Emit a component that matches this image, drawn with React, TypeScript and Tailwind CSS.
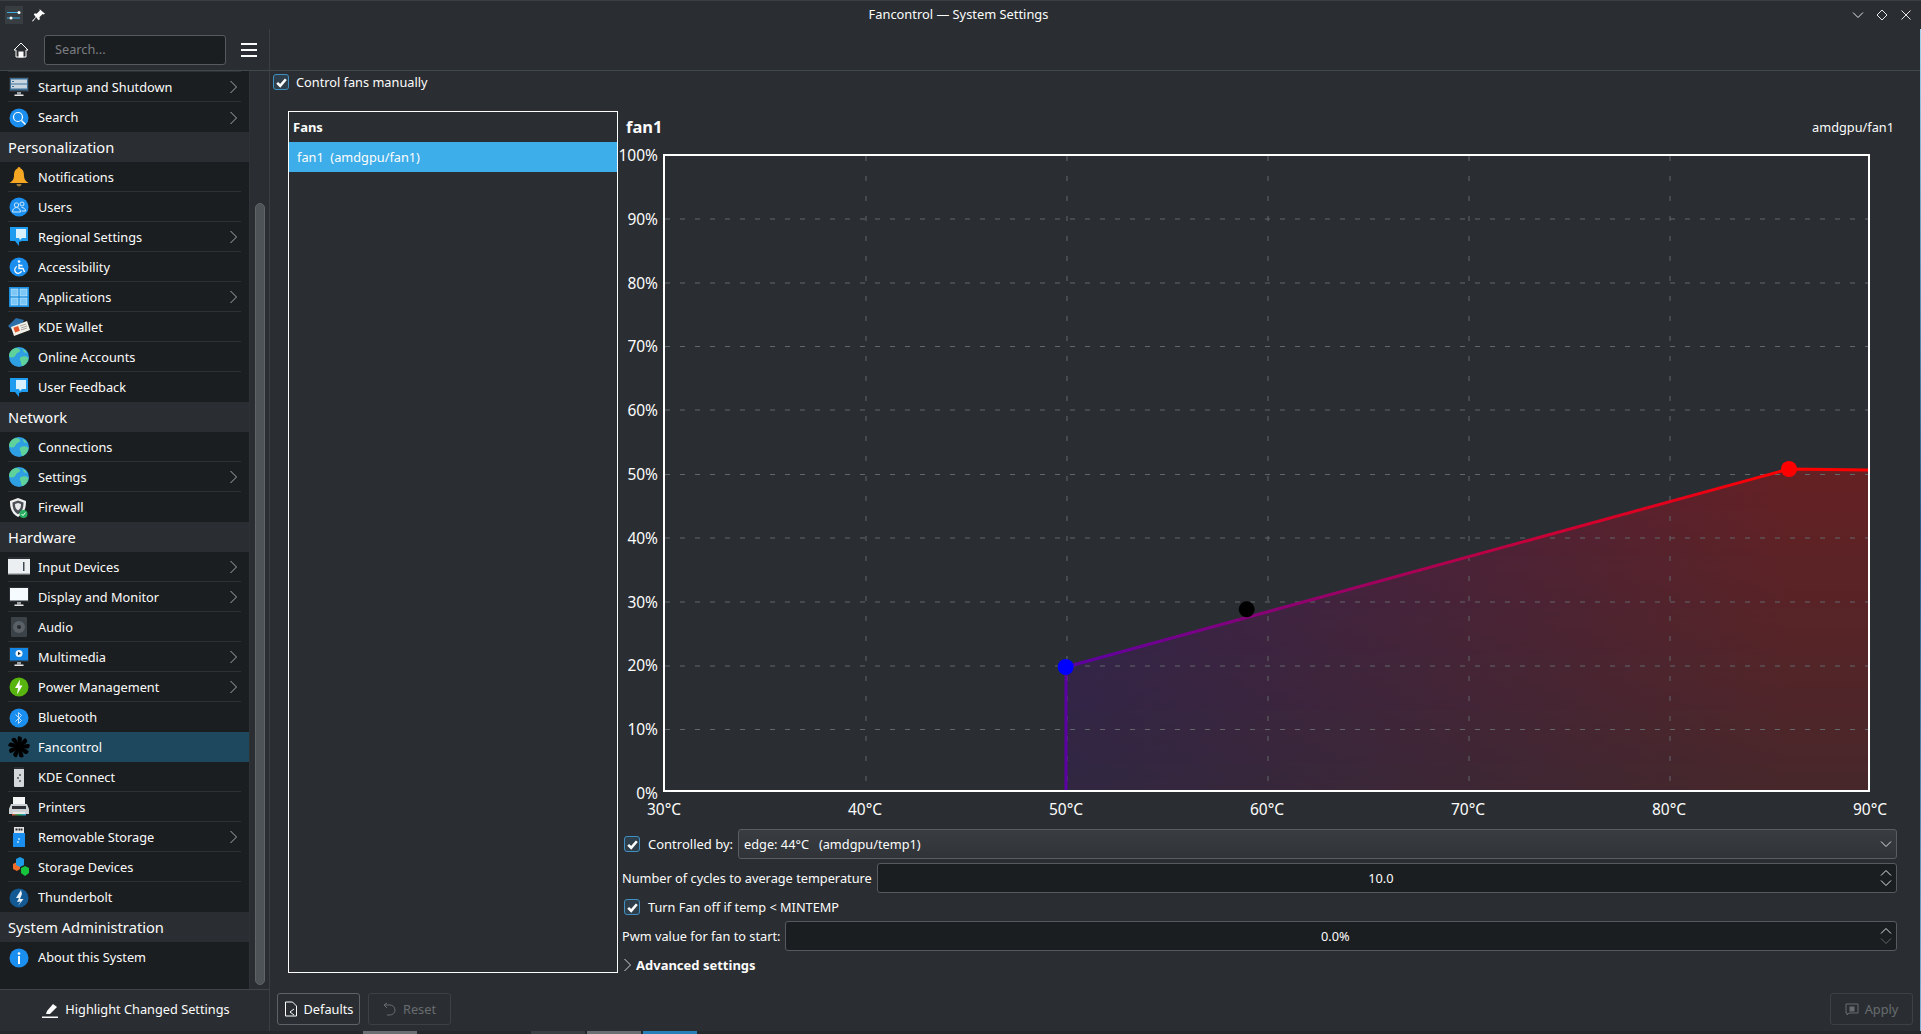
import React from "react";

type IconProps = { className?: string };

function Globe() {
  return (
    <svg viewBox="0 0 22 22" className="size-[22px]">
      <circle cx="11" cy="11" r="10" fill="#2f9fe4" />
      <path d="M6 2.500c3-1.500 6 0 6 2 0 2-3 2-4 4s-2 3-4 3-3-1-3-2c0-3 2-5.500 5-7z" fill="#5fd19a" />
      <path d="M13 11c2-1 6-1 7.500 1-.5 4-3 7-6 8-2-1-1-3-2-5s-1-3 .5-4z" fill="#5fd19a" />
      <path d="M15 3c2 1 3 2 4 4-2 0-4-1-4-4z" fill="#5fd19a" />
    </svg>
  );
}

function Bubble() {
  return (
    <svg viewBox="0 0 22 22" className="size-[22px]">
      <path d="M2 1h18v14h-6l-3 1v4l-4-5H2z" fill="#1e9cf0" />
      <path d="M8 3h10v9h-4l-2 2-1-2H8z" fill="#d9f0fd" />
    </svg>
  );
}

function BlueDisc({ children, fill = "#1b8fef" }: { children: React.ReactNode; fill?: string }) {
  return (
    <svg viewBox="0 0 22 22" className="size-[22px]">
      <circle cx="11" cy="11" r="9.500" fill={fill} />
      {children}
    </svg>
  );
}

function Monitor({ screen, children }: { screen: string; children?: React.ReactNode }) {
  return (
    <svg viewBox="0 0 22 22" className="size-[22px]">
      <rect x="1" y="1" width="20" height="15" fill="#2b2f33" />
      <rect x="2" y="2" width="18" height="12.500" fill={screen} />
      {children}
      <rect x="9" y="16" width="4" height="2.500" fill="#9a9ea2" />
      <rect x="6.500" y="18.500" width="9" height="1.500" fill="#e8e8e8" />
    </svg>
  );
}

function FanIcon() {
  const blades = [0, 1, 2, 3, 4, 5, 6, 7, 8];
  return (
    <svg viewBox="0 0 22 22" className="size-[22px]">
      <circle cx="11" cy="11" r="4" fill="#000" />
      {blades.map((i) => (
        <path
          key={i}
          d="M11 11C9.600 7.500 9 3.500 10 .2c2.500-.2 4 .8 4 2.400C13.800 6 12.600 8.600 11 11z"
          fill="#000"
          transform={`rotate(${i * 40} 11 11)`}
        />
      ))}
    </svg>
  );
}

const icons: Record<string, React.ReactNode> = {
  startup: (
    <Monitor screen="#3d6f96">
      <rect x="3" y="3.500" width="16" height="4" fill="#c9d6df" />
      <rect x="3" y="8.500" width="16" height="4" fill="#c9d6df" />
      <rect x="4" y="5" width="2" height="1" fill="#3d6f96" />
      <rect x="4" y="10" width="2" height="1" fill="#3d6f96" />
    </Monitor>
  ),
  search: (
    <BlueDisc>
      <circle cx="10" cy="10" r="4.500" fill="none" stroke="#fff" strokeWidth="1.200" />
      <path d="M13.500 13.500l4 4" stroke="#fff" strokeWidth="1.500" />
    </BlueDisc>
  ),
  bell: (
    <svg viewBox="0 0 22 22" className="size-[22px]">
      <path d="M11 1c1 0 1.500.8 1.500 1.500C15.500 3.500 16 7 16 10c0 3 1.500 5 4.500 7h-19C4.500 15 6 13 6 10c0-3 .5-6.500 3.500-7.500C9.500 1.800 10 1 11 1z" fill="#f5a623" />
      <path d="M8.500 18h5c0 1.500-1 2.500-2.500 2.500S8.500 19.500 8.500 18z" fill="#9a7b3a" />
    </svg>
  ),
  users: (
    <BlueDisc>
      <circle cx="8.500" cy="9" r="2.200" fill="none" stroke="#cfe8fb" />
      <circle cx="14" cy="8" r="2" fill="none" stroke="#cfe8fb" />
      <path d="M4.500 16c0-3 2-4.500 4-4.500s4 1.500 4 4.500zM13.500 11.500c2 0 4 1 4 3.500h-4" fill="none" stroke="#cfe8fb" />
    </BlueDisc>
  ),
  bubble: <Bubble />,
  access: (
    <BlueDisc>
      <circle cx="11" cy="5.500" r="1.300" fill="#fff" />
      <path d="M11 8v4.500h4l1.500 3.500M11 9.500h3.500M9 10.500a3.500 3.500 0 1 0 4.500 4.500" fill="none" stroke="#fff" strokeWidth="1.300" />
    </BlueDisc>
  ),
  apps: (
    <svg viewBox="0 0 22 22" className="size-[22px]">
      <rect x="1" y="1" width="20" height="20" fill="#1b8fe0" />
      <g fill="#7cc7f5" stroke="#e4f4fe" strokeWidth=".5">
        <rect x="3" y="3" width="7" height="7" />
        <rect x="12" y="3" width="7" height="7" />
        <rect x="3" y="12" width="7" height="7" />
        <rect x="12" y="12" width="7" height="7" />
      </g>
    </svg>
  ),
  wallet: (
    <svg viewBox="0 0 22 22" className="size-[22px]">
      <path d="M0 10L8 2l8 2-8 14z" fill="#2a6fa8" />
      <path d="M3 11L19 5l3 9-16 6z" fill="#f2efe6" />
      <rect x="6" y="11" width="5" height="5" transform="rotate(-20 8 13)" fill="#e2562a" />
      <path d="M12 10l6-2M13 12l6-2M13 14l6-2" stroke="#8a8a8a" strokeWidth=".7" />
    </svg>
  ),
  globe: <Globe />,
  shield: (
    <svg viewBox="0 0 22 22" className="size-[22px]">
      <path d="M10 1l8 3c0 8-2 13-8 16C4 17 2 12 2 4z" fill="#f0f0f0" />
      <path d="M10 3.500l5.500 2c0 5-1 9.500-5.500 11.800C5.500 15 4.500 10.500 4.500 5.500z" fill="#4a5056" />
      <path d="M10 6l3 1c0 3-.5 5-3 6.500C7.500 12 7 10 7 7z" fill="#e6e8ea" />
      <circle cx="15.500" cy="17" r="4" fill="#27ae60" />
      <path d="M13.500 17l1.500 1.500 2.500-3" fill="none" stroke="#fff" />
    </svg>
  ),
  input: (
    <svg viewBox="0 0 22 22" className="size-[22px]">
      <rect x="0" y="1" width="22" height="3" fill="#2c3034" />
      <rect x="0" y="3" width="22" height="15" fill="#eceff1" />
      <rect x="15" y="6" width="1.500" height="9" fill="#3e4a55" />
      <rect x="0" y="17" width="22" height="1.500" fill="#b8bcbf" />
    </svg>
  ),
  display: <Monitor screen="#f6fbff" />,
  audio: (
    <svg viewBox="0 0 22 22" className="size-[22px]">
      <rect x="3" y="1" width="16" height="20" rx="1" fill="#3b4248" />
      <circle cx="11" cy="11" r="6" fill="#596066" />
      <circle cx="11" cy="11" r="2" fill="#262a2d" />
    </svg>
  ),
  media: (
    <Monitor screen="#1486e6">
      <circle cx="11" cy="7.500" r="3.500" fill="#eef6fc" />
      <path d="M10 5.800v3.400l2.800-1.700z" fill="#1f2327" />
    </Monitor>
  ),
  power: (
    <BlueDisc fill="#58b50f">
      <path d="M12 3.500L7 12h3l-1 6.500 5.500-9h-3z" fill="#fff" />
    </BlueDisc>
  ),
  bluetooth: (
    <BlueDisc>
      <path d="M7.500 7.500l6 6-3 3v-11l3 3-6 6" fill="none" stroke="#bfe0f8" strokeWidth="1" />
    </BlueDisc>
  ),
  fan: <FanIcon />,
  phone: (
    <svg viewBox="0 0 22 22" className="size-[22px]">
      <rect x="6" y="1" width="10" height="20" rx="1" fill="#d5d8da" />
      <rect x="6" y="1" width="10" height="2" fill="#2d3135" />
      <circle cx="12" cy="9" r="1" fill="#555" />
      <circle cx="10" cy="12" r="1" fill="#555" />
      <circle cx="12" cy="15" r="1" fill="#555" />
    </svg>
  ),
  printer: (
    <svg viewBox="0 0 22 22" className="size-[22px]">
      <rect x="5" y="1" width="12" height="7" fill="#f4f5f5" />
      <path d="M3 8h16l2 5v5H1v-5z" fill="#cdd1d3" />
      <rect x="4" y="10" width="14" height="3" fill="#2e3236" />
      <rect x="5" y="16" width="12" height="2" fill="#e8e8e8" />
      <rect x="4" y="18" width="14" height="1.500" fill="url(#rainbow)" />
      <defs>
        <linearGradient id="rainbow">
          <stop offset="0" stopColor="#e74c3c" />
          <stop offset=".5" stopColor="#27ae60" />
          <stop offset="1" stopColor="#3498db" />
        </linearGradient>
      </defs>
    </svg>
  ),
  usb: (
    <svg viewBox="0 0 22 22" className="size-[22px]">
      <rect x="6" y="1" width="10" height="8" fill="#e4e4e4" />
      <rect x="7.500" y="2.500" width="2" height="2" fill="#23272a" />
      <rect x="10.500" y="2.500" width="2" height="2" fill="#23272a" />
      <rect x="13" y="2.500" width="1.500" height="2" fill="#23272a" />
      <rect x="5" y="7" width="12" height="14" fill="#1b8fef" />
      <circle cx="11" cy="13" r="1" fill="#bfe0f8" />
      <circle cx="10" cy="16" r="1" fill="#bfe0f8" />
    </svg>
  ),
  storage: (
    <svg viewBox="0 0 22 22" className="size-[22px]">
      <path d="M5 8l4-2 3 2v5l-3 2-4-2z" fill="#ef6c2a" />
      <path d="M12 1l4 2v6l-4 2-4-2V3z" fill="#1d9be8" />
      <path d="M17 10l4 2v5l-4 3-4-3v-5z" fill="#17c53d" />
    </svg>
  ),
  thunder: (
    <BlueDisc fill="#135a94">
      <path d="M13 3L8 11h3l-2 4 3.500-.5L10 19l5.500-7H12l2-5z" fill="#e9f2f8" />
    </BlueDisc>
  ),
  about: (
    <BlueDisc>
      <circle cx="11" cy="6.500" r="1.300" fill="#fff" />
      <rect x="10" y="9" width="2" height="8" fill="#fff" />
    </BlueDisc>
  ),
};

type Item = { label: string; icon?: string; more?: boolean; head?: boolean; active?: boolean; last?: boolean };

const items: Item[] = [
  { label: "Startup and Shutdown", icon: "startup", more: true },
  { label: "Search", icon: "search", more: true, last: true },
  { label: "Personalization", head: true },
  { label: "Notifications", icon: "bell" },
  { label: "Users", icon: "users" },
  { label: "Regional Settings", icon: "bubble", more: true },
  { label: "Accessibility", icon: "access" },
  { label: "Applications", icon: "apps", more: true },
  { label: "KDE Wallet", icon: "wallet" },
  { label: "Online Accounts", icon: "globe" },
  { label: "User Feedback", icon: "bubble", last: true },
  { label: "Network", head: true },
  { label: "Connections", icon: "globe" },
  { label: "Settings", icon: "globe", more: true },
  { label: "Firewall", icon: "shield", last: true },
  { label: "Hardware", head: true },
  { label: "Input Devices", icon: "input", more: true },
  { label: "Display and Monitor", icon: "display", more: true },
  { label: "Audio", icon: "audio" },
  { label: "Multimedia", icon: "media", more: true },
  { label: "Power Management", icon: "power", more: true },
  { label: "Bluetooth", icon: "bluetooth", last: true },
  { label: "Fancontrol", icon: "fan", active: true, last: true },
  { label: "KDE Connect", icon: "phone" },
  { label: "Printers", icon: "printer" },
  { label: "Removable Storage", icon: "usb", more: true },
  { label: "Storage Devices", icon: "storage" },
  { label: "Thunderbolt", icon: "thunder", last: true },
  { label: "System Administration", head: true },
  { label: "About this System", icon: "about", last: true },
];

function ChevronUp({ className }: IconProps) {
  return (
    <svg viewBox="0 0 12 9" className={className} fill="none" stroke="currentColor">
      <path d="M1 7.500l5-5 5 5" />
    </svg>
  );
}

function ChevronDown({ className }: IconProps) {
  return (
    <svg viewBox="0 0 12 9" className={className} fill="none" stroke="currentColor">
      <path d="M1 1.500l5 5 5-5" />
    </svg>
  );
}

function ChevronRight({ className }: IconProps) {
  return (
    <svg viewBox="0 0 9 14" className={className} fill="none" stroke="currentColor">
      <path d="M1.500 1l6 6-6 6" />
    </svg>
  );
}

function Check() {
  return (
    <span className="flex size-4 shrink-0 items-center justify-center rounded-[3px] border border-[#3f8fc2] bg-[#2e3f4b]">
      <svg viewBox="0 0 12 12" className="size-[13px]" fill="none" stroke="#fcfcfc" strokeWidth="2.400">
        <path d="M2 6.300l2.800 2.700L10 3" />
      </svg>
    </span>
  );
}

function Row({ item }: { item: Item }) {
  if (item.head) {
    return (
      <div className="flex h-[30px] items-center bg-[#2a2e32] pl-2 text-[14.700px]">{item.label}</div>
    );
  }
  if (item.active) {
    return (
      <div className="flex h-[30px] items-center gap-2 bg-[#1e485e] pl-2">
        <span className="flex size-[22px] shrink-0">{icons[item.icon!]}</span>
        <span className="pt-px">{item.label}</span>
      </div>
    );
  }
  return (
    <div className="h-[30px] px-2">
      <div className={`flex h-[30px] items-center gap-2 pt-px ${item.last ? "" : "border-b border-[#2d3134]"}`}>
        <span className="flex size-[22px] shrink-0">{icons[item.icon!]}</span>
        <span className="flex-1 pt-px">{item.label}</span>
        {item.more && <ChevronRight className="mr-[3px] h-[14px] w-[9px] text-[#a8abad]" />}
      </div>
    </div>
  );
}

function Sidebar() {
  return (
    <div className="flex w-[270px] shrink-0 flex-col border-r border-[#3a3f43]">
      <div className="flex h-[42px] items-center border-b border-[#3f494b]">
        <svg viewBox="0 0 16 16" className="ml-[13px] size-4" fill="none" stroke="#fcfcfc" strokeWidth="1">
          <path d="M8 1L1 8h2v7h10V8h2z" />
          <rect x="6" y="10" width="4" height="5" fill="#fcfcfc" />
        </svg>
        <div className="ml-[15px] flex h-[30px] w-[182px] items-center rounded-[3px] border border-[#575b5f] bg-[#1b1e20] pl-[10px] text-[#7b7f83]">
          Search...
        </div>
        <div className="ml-[15px] flex w-4 flex-col gap-1">
          <span className="h-0.5 bg-[#fcfcfc]" />
          <span className="h-0.5 bg-[#fcfcfc]" />
          <span className="h-0.5 bg-[#fcfcfc]" />
        </div>
      </div>
      <div className="flex min-h-0 flex-1">
        <div className="w-[249px] shrink-0 bg-[#1b1e20]">
          <div className="mx-2 h-px bg-[#2d3134]" />
          {items.map((item) => (
            <Row key={item.label} item={item} />
          ))}
        </div>
        <div className="flex-1 border-l border-[#2f3336] pt-[132px] pl-[5px]">
          <div className="h-[782px] w-2.5 rounded-[5px] border border-[#5f6467] bg-[#4d5356]" />
        </div>
      </div>
      <div className="flex h-[42px] items-center justify-center gap-[7px] border-t border-[#3f4548] pb-[1px] pl-[3px]">
        <svg viewBox="0 0 16 16" className="size-4" fill="#fcfcfc">
          <path d="M5 9l6-7 4 3-7 7H4z" />
          <path d="M0 14.500h16V16H0z" />
        </svg>
        <span>Highlight Changed Settings</span>
      </div>
    </div>
  );
}

const yTicks = [100, 90, 80, 70, 60, 50, 40, 30, 20, 10, 0];
const xTicks = [30, 40, 50, 60, 70, 80, 90];

function Chart() {
  return (
    <div className="relative ml-[43px] mt-3 h-[638px] w-[1207px]">
      <svg viewBox="0 0 1207 638" className="block h-[638px] w-[1207px]">
        <defs>
          <linearGradient id="curve" gradientUnits="userSpaceOnUse" x1="0" y1="0" x2="1126" y2="0">
            <stop offset="0" stopColor="#0000ff" />
            <stop offset="1" stopColor="#ff0000" />
          </linearGradient>
          <linearGradient id="fade" gradientUnits="userSpaceOnUse" x1="0" y1="315" x2="0" y2="637">
            <stop offset="0" stopColor="#fff" stopOpacity="1" />
            <stop offset="1" stopColor="#fff" stopOpacity=".5" />
          </linearGradient>
          <mask id="fadeMask" maskUnits="userSpaceOnUse" x="0" y="0" width="1207" height="638">
            <rect width="1207" height="638" fill="url(#fade)" />
          </mask>
        </defs>
        <path
          d="M403 636V513L1126 315L1205 316V636Z"
          fill="url(#curve)"
          fillOpacity=".28"
          mask="url(#fadeMask)"
        />
        {[65, 129, 192.500, 256, 320.500, 384, 448, 512, 575.500].map((y) => (
          <line key={y} x1="2" x2="1205" y1={y} y2={y} stroke="#63676b" strokeDasharray="5 10" />
        ))}
        {[203, 404, 605, 806, 1007].map((x) => (
          <line key={x} x1={x} x2={x} y1="2" y2="636" stroke="#63676b" strokeDasharray="5 15" />
        ))}
        <path
          d="M403 636V513L1126 315L1205 316"
          fill="none"
          stroke="url(#curve)"
          strokeWidth="3"
        />
        <circle cx="402.700" cy="513" r="8" fill="#0000ff" />
        <circle cx="583.700" cy="455.300" r="8" fill="#000" />
        <circle cx="1126" cy="315" r="8" fill="#ff0000" />
        <rect x="1" y="1" width="1205" height="636" fill="none" stroke="#fff" strokeWidth="2" />
      </svg>
      {yTicks.map((p) => (
        <span
          key={p}
          className="absolute right-[calc(100%+5px)] -translate-y-1/2 text-[15.500px] leading-none"
          style={{ top: 2 + (100 - p) * 6.38 }}
        >
          {p}%
        </span>
      ))}
      {xTicks.map((t, i) => (
        <span
          key={t}
          className="absolute top-[656px] -translate-x-1/2 -translate-y-1/2 text-[15.500px] leading-none"
          style={{ left: 1 + i * 201 }}
        >
          {t}°C
        </span>
      ))}
    </div>
  );
}

function Spin({ value, dim, className }: { value: string; dim?: boolean; className: string }) {
  return (
    <div className={`relative flex h-[30px] items-center justify-center rounded-[3px] border border-[#575b5f] bg-[#1b1e20] pr-3 pt-px ${className}`}>
      {value}
      <div className="absolute right-[4px] top-[4px] flex flex-col gap-[2px]">
        <ChevronUp className="h-[9px] w-3 text-[#e0e0e0]" />
        <ChevronDown className={`h-[9px] w-3 ${dim ? "text-[#62666a]" : "text-[#e0e0e0]"}`} />
      </div>
    </div>
  );
}

function Detail() {
  return (
    <div className="flex w-[1277px] flex-col">
      <div className="flex h-[31px] items-center justify-between pl-[6px] pr-[3px] pt-[2px]">
        <span className="text-[16.500px] font-bold">fan1</span>
        <span>amdgpu/fan1</span>
      </div>
      <div className="h-[687px]">
        <Chart />
      </div>
      <div className="flex h-[30px] items-center pl-[4px]">
        <Check />
        <span className="ml-2 mr-[5px] whitespace-nowrap pt-px text-[13px]">Controlled by:</span>
        <div className="flex h-[30px] flex-1 items-center justify-between whitespace-pre rounded-[3px] border border-[#5a5e62] bg-gradient-to-b from-[#393d41] to-[#303438] pl-[5px] pr-[4px]">
          <span className="pt-px">edge: 44°C   (amdgpu/temp1)</span>
          <ChevronDown className="h-[9px] w-3 text-[#e0e0e0]" />
        </div>
      </div>
      <div className="mt-1 flex h-[30px] items-center gap-[5px] pl-[2px]">
        <span className="whitespace-nowrap pt-px">Number of cycles to average temperature</span>
        <Spin value="10.0" className="flex-1" />
      </div>
      <div className="flex h-[28px] items-center pl-[4px]">
        <Check />
        <span className="ml-2 pt-px">Turn Fan off if temp &lt; MINTEMP</span>
      </div>
      <div className="flex h-[30px] items-center gap-[5px] pl-[2px]">
        <span className="whitespace-nowrap pt-px">Pwm value for fan to start:</span>
        <Spin value="0.0%" dim className="flex-1" />
      </div>
      <div className="flex h-[28px] items-center gap-[4px] pl-[3px]">
        <ChevronRight className="h-[14px] w-[9px] text-[#d0d0d0]" />
        <span className="pt-px text-[13px] font-bold">Advanced settings</span>
      </div>
    </div>
  );
}

function Button({ label, disabled, icon }: { label: string; disabled?: boolean; icon: React.ReactNode }) {
  return (
    <div
      className={`flex h-8 w-[83px] items-center justify-center gap-[6px] rounded-[3px] border ${
        disabled ? "border-[#3d4145] text-[#686c6f]" : "border-[#5f6367]"
      }`}
    >
      {icon}
      <span className="pt-px">{label}</span>
    </div>
  );
}

export default function App() {
  return (
    <div className="flex h-[1034px] w-[1921px] flex-col overflow-hidden bg-[#2a2e32] font-['Noto_Sans',sans-serif] text-[12.750px] text-[#fcfcfc]">
      <div className="flex h-[29px] shrink-0 items-center border-t border-[#3a3f43]">
        <div className="flex flex-1 items-center">
          <svg viewBox="0 0 18 18" className="ml-[5px] size-[18px]">
            <rect width="18" height="18" fill="#383d41" />
            <path d="M2 6.500h13M2 12h13" stroke="#3daee9" strokeWidth="1" />
            <circle cx="14" cy="6.500" r="1.500" fill="#fff" />
            <circle cx="6" cy="12" r="1.500" fill="#fff" />
          </svg>
          <svg viewBox="0 0 14 14" className="ml-[9px] size-[13px]" fill="#fcfcfc">
            <path d="M8 0l6 5-1.500 1-1-.5L8 9l.5 2L7 12 4.500 9 1 13.500 0 13l4-4.500L2 6l1-1.500 2 .5 3.500-3.500z" />
          </svg>
        </div>
        <span className="ml-[5px] text-[12.850px]">Fancontrol — System Settings</span>
        <div className="flex flex-1 items-center justify-end gap-3 pr-[9px] text-[#e6e6e6]">
          <svg viewBox="0 0 12 12" className="size-3" fill="none" stroke="currentColor">
            <path d="M1 3.500l5 5 5-5" />
          </svg>
          <svg viewBox="0 0 12 12" className="size-3" fill="none" stroke="currentColor">
            <path d="M6 1l5 5-5 5-5-5z" />
          </svg>
          <svg viewBox="0 0 12 12" className="size-3" fill="none" stroke="currentColor">
            <path d="M1.500 1.500l9 9M10.500 1.500l-9 9" />
          </svg>
        </div>
      </div>

      <div className="flex h-[1002px] shrink-0">
        <Sidebar />
        <div className="flex min-w-0 flex-1 flex-col">
          <div className="h-[42px] shrink-0 border-b border-[#3f494b]" />
          <div className="flex h-[22px] items-center gap-[7px] pl-[3px]">
            <Check />
            <span className="pt-px">Control fans manually</span>
          </div>
          <div className="mt-[18px] flex h-[862px] pl-[18px]">
            <div className="h-[862px] w-[330px] shrink-0 border border-[#fcfcfc]">
              <div className="flex h-[30px] items-center pl-[4px] pt-px text-[13px] font-bold">Fans</div>
              <div className="flex h-[30px] items-center whitespace-pre bg-[#3daee9] pl-2 pt-px">fan1  (amdgpu/fan1)</div>
            </div>
            <div className="ml-[2px]">
              <Detail />
            </div>
          </div>
          <div className="mt-5 flex items-center gap-2 pl-[7px] pr-[7px]">
            <Button
              label="Defaults"
              icon={
                <svg viewBox="0 0 14 16" className="h-4 w-[14px]" fill="none" stroke="#fcfcfc">
                  <path d="M1.500 1h7l4 4v10h-11z" />
                  <path d="M10 8L6 11l4 3" />
                </svg>
              }
            />
            <Button
              label="Reset"
              disabled
              icon={
                <svg viewBox="0 0 14 14" className="size-[14px]" fill="none" stroke="#686c6f">
                  <path d="M1 3l3-2M1 3l3 3M1 3h6a5 5 0 0 1 0 10H4" />
                </svg>
              }
            />
            <div className="ml-auto">
              <Button
                label="Apply"
                disabled
                icon={
                  <svg viewBox="0 0 14 14" className="size-[14px]" fill="none" stroke="#686c6f">
                    <path d="M1 2h12v9H4l-2 2v-2H1z" />
                    <rect x="5" y="5" width="4" height="4" fill="#686c6f" />
                  </svg>
                }
              />
            </div>
          </div>
        </div>
        <div className="w-px shrink-0 bg-gradient-to-b from-[#9fd4ec] via-[#2b5a86] to-[#7fb0d6]" />
      </div>

      <div className="flex h-[3px] shrink-0 bg-[#25282b]">
        <span className="ml-[363px] w-[54px] bg-[#6b6f72]" />
        <span className="ml-[114px] w-[54px] bg-[#3a3f43]" />
        <span className="ml-[2px] w-[54px] bg-[#6b6f72]" />
        <span className="ml-[2px] w-[54px] bg-[#2980b9]" />
      </div>
    </div>
  );
}
